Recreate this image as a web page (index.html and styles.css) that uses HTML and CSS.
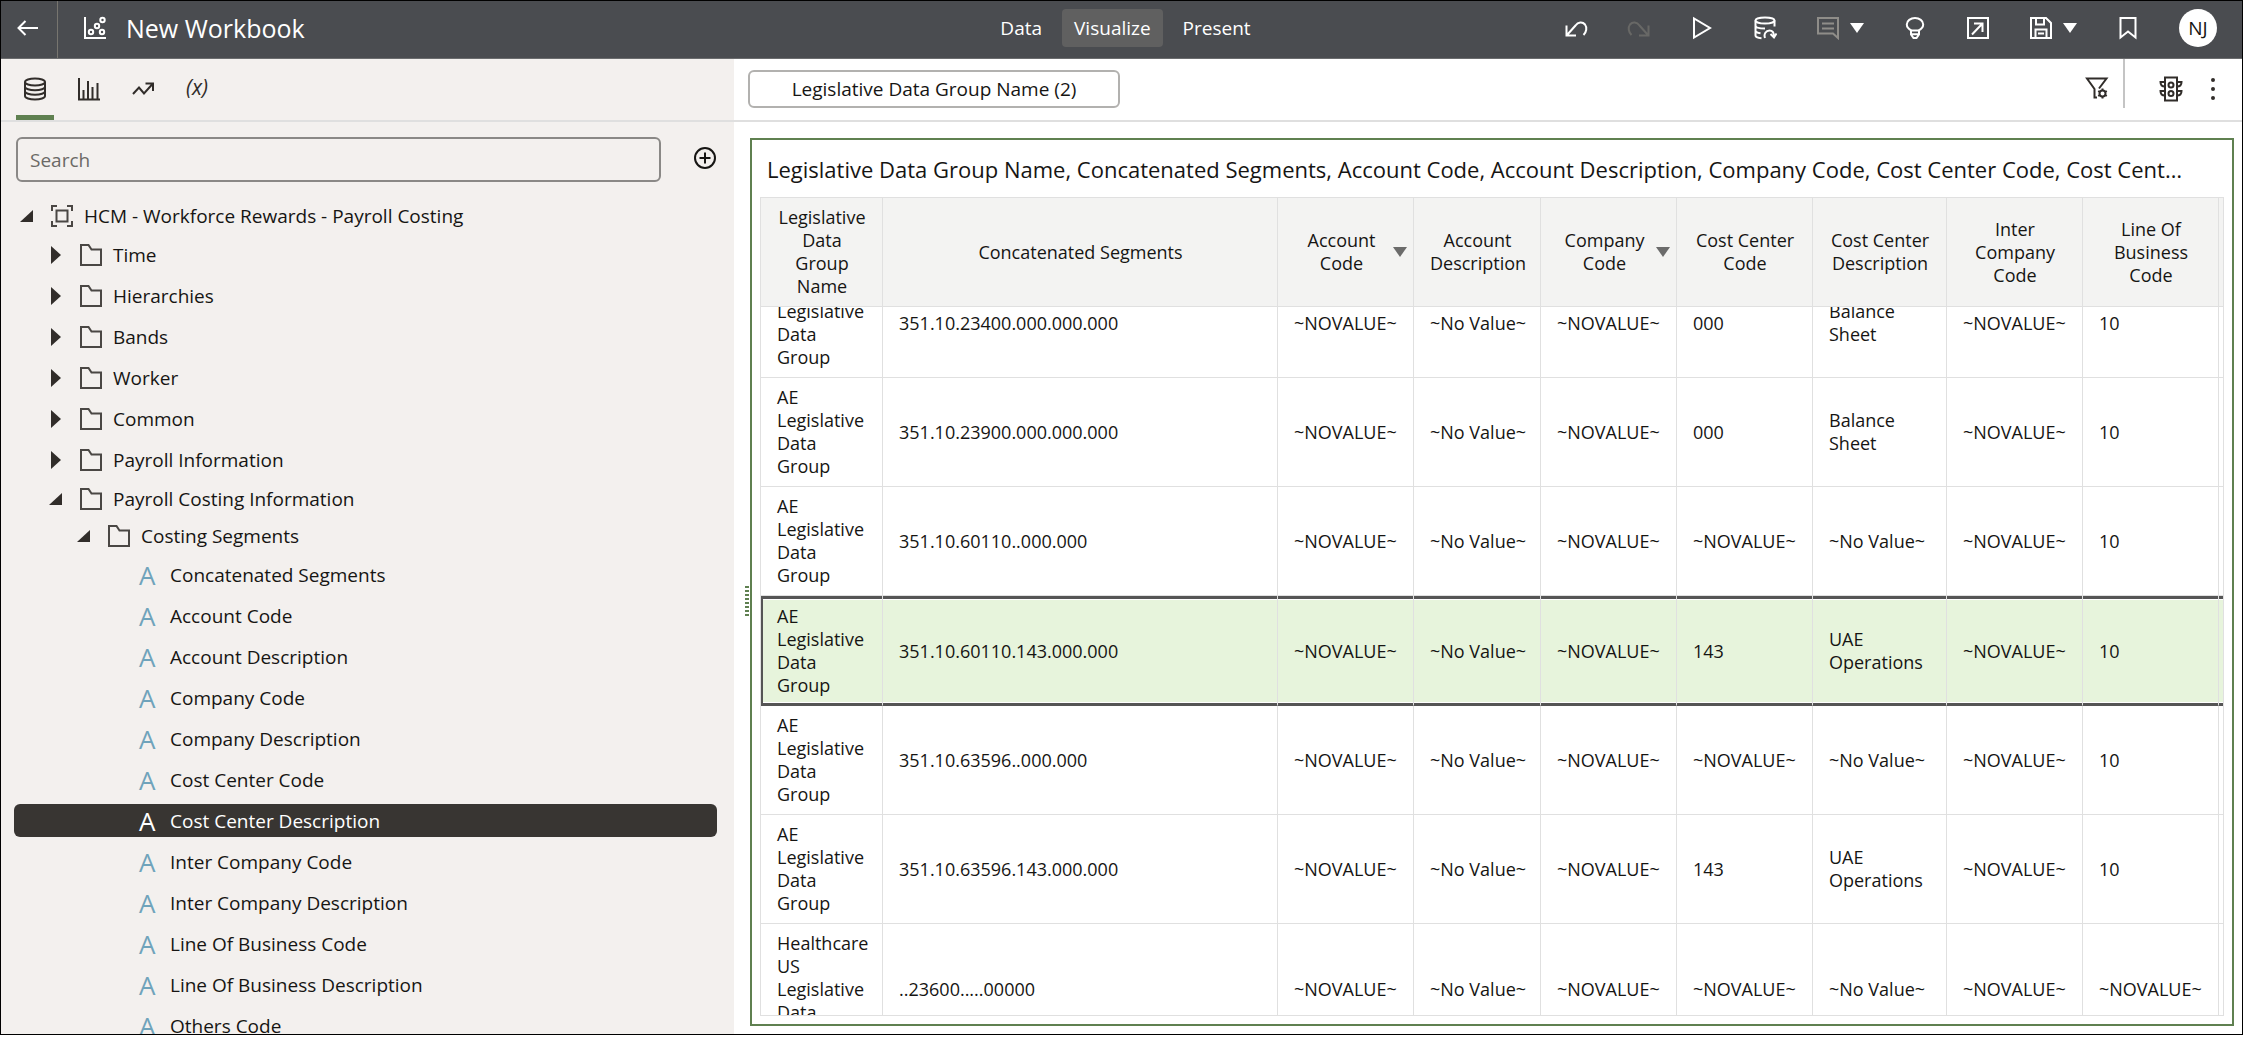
FILE: index.html
```html
<!DOCTYPE html>
<html lang="en">
<head>
  <meta charset="UTF-8">
  <title>New Workbook</title>
  <meta name="viewport" content="width=device-width, initial-scale=1.0">
  <link rel="stylesheet" href="styles.css">
</head>
<body>
  <!-- Icon set -->
  <svg class="sprite" aria-hidden="true">
    <symbol id="i-back" viewBox="0 0 24 24"><path d="M22 12H3M9.500 5 2.500 12l7 7"/></symbol>
    <symbol id="i-scatter" viewBox="0 0 24 24"><path d="M2 1v21h21"/><circle cx="8" cy="16" r="2.200"/><circle cx="14" cy="10" r="2.200"/><circle cx="19" cy="16" r="2.200"/><circle cx="19.500" cy="4" r="2.200"/></symbol>
    <symbol id="i-undo" viewBox="0 0 24 24"><path d="M2.500 9.500v10H12M3 19l8.500-9.500c2.500-3.500 7-4 9.500-1 2.300 3 1.500 7.500-1.500 10.500"/></symbol>
    <symbol id="i-play" viewBox="0 0 24 24"><path d="M4 2.500v19l16-9.500z"/></symbol>
    <symbol id="i-dbrefresh" viewBox="0 0 24 24"><ellipse cx="12" cy="4.500" rx="9.500" ry="3"/><path d="M2.500 4.500v15c0 1.700 3 2.500 6 2.700M21.500 4.500v6M2.500 9.500c0 2 4 3 9.500 3M2.500 14.500c0 1.500 2 2.300 5 2.700M12 22c-1.500-4 1-7.500 4.500-7.500s4.500 2.500 4.500 6M17.500 18l3.500 3.500 2.500-4"/></symbol>
    <symbol id="i-comment" viewBox="0 0 24 24"><path d="M2 2h20v20l-5-4.500H2zM6 7.500h12M6 12.500h12"/></symbol>
    <symbol id="i-bulb" viewBox="0 0 24 24"><path d="M8.500 14.500C5.500 13 3.800 11 3.800 8.500 3.800 4.800 7.500 2 12 2s8.200 2.800 8.200 6.500c0 2.500-1.700 4.500-4.700 6M8 14.500h8v4l-2.500 3.500h-3L8 18.500zM8 18.200h8"/></symbol>
    <symbol id="i-export" viewBox="0 0 24 24"><path d="M2 2h20v20H2zM8 7.500h8.500V16M16 8 6 18.500"/></symbol>
    <symbol id="i-save" viewBox="0 0 24 24"><path d="M2 2h15l5 5v15H2zM7 2v6.500h8V2M6.500 22v-8.500h11V22M9 17.500h6"/></symbol>
    <symbol id="i-bookmark" viewBox="0 0 24 24"><path d="M4.500 2h15v19.500L12 15.500l-7.500 6z"/></symbol>
    <symbol id="i-db" viewBox="0 0 24 24"><ellipse cx="12" cy="5" rx="10" ry="3.500"/><path d="M2 5v14c0 2 4.500 3.500 10 3.500S22 21 22 19V5M2 9.700c0 2 4.500 3.500 10 3.500s10-1.500 10-3.500M2 14.300c0 2 4.500 3.500 10 3.500s10-1.500 10-3.500"/></symbol>
    <symbol id="i-bars" viewBox="0 0 24 24"><path d="M2 1v21.500h21M6.500 22v-9M11 22V4M15.500 22V10M20.500 22V6"/></symbol>
    <symbol id="i-trend" viewBox="0 0 24 24"><path d="m2 17 6-6.500 5 6L21.500 7M14.500 6.500H22V14"/></symbol>
    <symbol id="i-plus" viewBox="0 0 24 24"><circle cx="12" cy="12" r="10"/><path d="M12 6.500v11M6.500 12h11"/></symbol>
    <symbol id="i-subject" viewBox="0 0 24 24"><path d="M6.500 6.500h11v11h-11zM2 7V2h5M17 2h5v5M22 17v5h-5M7 22H2v-5"/></symbol>
    <symbol id="i-folder" viewBox="0 0 24 24"><path d="M2 2h7.500l3 4.500H22V22H2z"/></symbol>
    <symbol id="i-filter" viewBox="0 0 24 24"><path d="M14 12.500 21.500 2.500H2L9.500 13v8.500h2.500"/><circle cx="17.500" cy="17.500" r="3"/><path d="M17.500 12.500v2M17.500 20.500v2M13.200 15l1.700 1M20.100 19l1.700 1M13.200 20l1.700-1M20.100 16l1.700-1"/></symbol>
    <symbol id="i-traffic" viewBox="0 0 24 26"><path d="M6 1.500h12v23H6z"/><circle cx="12" cy="9" r="2.500"/><circle cx="12" cy="17.500" r="2.500"/><path d="M6 6H1.500c0 3 2 4.500 4.500 4.500M18 6h4.500c0 3-2 4.500-4.500 4.500M6 15H1.500c0 3 2 4.500 4.500 4.500M18 15h4.500c0 3-2 4.500-4.500 4.500"/></symbol>
    <symbol id="i-dots" viewBox="0 0 24 24"><path class="solid" d="M10 3a2 2 0 1 0 4 0 2 2 0 1 0-4 0M10 12a2 2 0 1 0 4 0 2 2 0 1 0-4 0M10 21a2 2 0 1 0 4 0 2 2 0 1 0-4 0"/></symbol>
    <symbol id="i-closed" viewBox="0 0 14 18"><path class="solid" d="M3 0v18l10-9z"/></symbol>
    <symbol id="i-open" viewBox="0 0 14 14"><path class="solid" d="M14 1v12H1z"/></symbol>
    <symbol id="i-caret" viewBox="0 0 14 10"><path class="solid" d="M0 0h14L7 10z"/></symbol>
  </svg>

  <div class="app">
    <header class="topbar">
      <div class="topbar-left">
        <button class="back" aria-label="Back"><svg class="icon"><use href="#i-back"/></svg></button>
        <svg class="icon"><use href="#i-scatter"/></svg>
        <h1>New Workbook</h1>
      </div>
      <nav class="modes">
        <button>Data</button>
        <button class="active">Visualize</button>
        <button>Present</button>
      </nav>
      <div class="tools">
        <button aria-label="Undo"><svg class="icon"><use href="#i-undo"/></svg></button>
        <button class="flip dark" aria-label="Redo" disabled><svg class="icon"><use href="#i-undo"/></svg></button>
        <button aria-label="Play"><svg class="icon"><use href="#i-play"/></svg></button>
        <button aria-label="Refresh data"><svg class="icon"><use href="#i-dbrefresh"/></svg></button>
        <div class="split">
          <button class="dim" aria-label="Notes" disabled><svg class="icon"><use href="#i-comment"/></svg></button>
          <button aria-label="Notes menu"><svg class="caret"><use href="#i-caret"/></svg></button>
        </div>
        <button aria-label="Insights"><svg class="icon"><use href="#i-bulb"/></svg></button>
        <button aria-label="Export"><svg class="icon"><use href="#i-export"/></svg></button>
        <div class="split">
          <button aria-label="Save"><svg class="icon"><use href="#i-save"/></svg></button>
          <button aria-label="Save menu"><svg class="caret"><use href="#i-caret"/></svg></button>
        </div>
        <button aria-label="Bookmark"><svg class="icon"><use href="#i-bookmark"/></svg></button>
        <button class="avatar">NJ</button>
      </div>
    </header>

    <aside class="sidebar">
      <div class="panel-tabs">
        <button class="active" aria-label="Data"><svg class="icon"><use href="#i-db"/></svg></button>
        <button aria-label="Visualizations"><svg class="icon"><use href="#i-bars"/></svg></button>
        <button aria-label="Analytics"><svg class="icon"><use href="#i-trend"/></svg></button>
        <button class="params" aria-label="Parameters">(x)</button>
      </div>
      <div class="search">
        <input type="text" placeholder="Search" aria-label="Search">
        <button aria-label="Add"><svg class="icon"><use href="#i-plus"/></svg></button>
      </div>
      <ul class="tree">
        <li class="open"><svg class="twist"><use href="#i-open"/></svg><svg class="icon"><use href="#i-subject"/></svg>HCM - Workforce Rewards - Payroll Costing</li>
        <li class="lvl2"><svg class="twist"><use href="#i-closed"/></svg><svg class="icon"><use href="#i-folder"/></svg>Time</li>
        <li class="lvl2"><svg class="twist"><use href="#i-closed"/></svg><svg class="icon"><use href="#i-folder"/></svg>Hierarchies</li>
        <li class="lvl2"><svg class="twist"><use href="#i-closed"/></svg><svg class="icon"><use href="#i-folder"/></svg>Bands</li>
        <li class="lvl2"><svg class="twist"><use href="#i-closed"/></svg><svg class="icon"><use href="#i-folder"/></svg>Worker</li>
        <li class="lvl2"><svg class="twist"><use href="#i-closed"/></svg><svg class="icon"><use href="#i-folder"/></svg>Common</li>
        <li class="lvl2"><svg class="twist"><use href="#i-closed"/></svg><svg class="icon"><use href="#i-folder"/></svg>Payroll Information</li>
        <li class="lvl2 open"><svg class="twist"><use href="#i-open"/></svg><svg class="icon"><use href="#i-folder"/></svg>Payroll Costing Information</li>
        <li class="lvl3 open"><svg class="twist"><use href="#i-open"/></svg><svg class="icon"><use href="#i-folder"/></svg>Costing Segments</li>
        <li class="leaf"><span class="type">A</span>Concatenated Segments</li>
        <li class="leaf"><span class="type">A</span>Account Code</li>
        <li class="leaf"><span class="type">A</span>Account Description</li>
        <li class="leaf"><span class="type">A</span>Company Code</li>
        <li class="leaf"><span class="type">A</span>Company Description</li>
        <li class="leaf"><span class="type">A</span>Cost Center Code</li>
        <li class="leaf selected"><span class="type">A</span>Cost Center Description</li>
        <li class="leaf"><span class="type">A</span>Inter Company Code</li>
        <li class="leaf"><span class="type">A</span>Inter Company Description</li>
        <li class="leaf"><span class="type">A</span>Line Of Business Code</li>
        <li class="leaf"><span class="type">A</span>Line Of Business Description</li>
        <li class="leaf"><span class="type">A</span>Others Code</li>
      </ul>
    </aside>

    <main>
      <div class="filterbar">
        <button class="chip">Legislative Data Group Name (2)</button>
        <div class="filter-tools">
          <button class="filter" aria-label="Filter settings"><svg class="icon"><use href="#i-filter"/></svg></button>
          <button aria-label="Auto apply"><svg class="icon tall"><use href="#i-traffic"/></svg></button>
          <button aria-label="Menu"><svg class="icon"><use href="#i-dots"/></svg></button>
        </div>
      </div>
      <section class="viz">
        <h2>Legislative Data Group Name, Concatenated Segments, Account Code, Account Description, Company Code, Cost Center Code, Cost Center Description, Inter Company Code, Line Of Business Code</h2>
        <div class="grid" id="grid">
          <table>
            <colgroup>
              <col class="c-name"><col><col class="c-code"><col class="c-short"><col class="c-code"><col class="c-code"><col class="c-desc"><col class="c-code"><col class="c-code"><col class="c-end">
            </colgroup>
            <thead>
              <tr>
                <th>Legislative Data Group Name</th>
                <th>Concatenated Segments</th>
                <th class="sorted"><div>Account Code<svg class="caret"><use href="#i-caret"/></svg></div></th>
                <th>Account Description</th>
                <th class="sorted"><div>Company Code<svg class="caret"><use href="#i-caret"/></svg></div></th>
                <th>Cost Center Code</th>
                <th>Cost Center Description</th>
                <th>Inter Company Code</th>
                <th>Line Of Business Code</th>
                <th class="end"></th>
              </tr>
            </thead>
            <tbody>
              <tr>
                <td>AE Legislative Data Group</td>
                <td>351.10.23400.000.000.000</td>
                <td>~NOVALUE~</td>
                <td>~No Value~</td>
                <td>~NOVALUE~</td>
                <td>000</td>
                <td>Balance Sheet</td>
                <td>~NOVALUE~</td>
                <td>10</td>
                <td class="end"></td>
              </tr>
              <tr>
                <td>AE Legislative Data Group</td>
                <td>351.10.23900.000.000.000</td>
                <td>~NOVALUE~</td>
                <td>~No Value~</td>
                <td>~NOVALUE~</td>
                <td>000</td>
                <td>Balance Sheet</td>
                <td>~NOVALUE~</td>
                <td>10</td>
                <td class="end"></td>
              </tr>
              <tr>
                <td>AE Legislative Data Group</td>
                <td>351.10.60110..000.000</td>
                <td>~NOVALUE~</td>
                <td>~No Value~</td>
                <td>~NOVALUE~</td>
                <td>~NOVALUE~</td>
                <td>~No Value~</td>
                <td>~NOVALUE~</td>
                <td>10</td>
                <td class="end"></td>
              </tr>
              <tr class="selected">
                <td>AE Legislative Data Group</td>
                <td>351.10.60110.143.000.000</td>
                <td>~NOVALUE~</td>
                <td>~No Value~</td>
                <td>~NOVALUE~</td>
                <td>143</td>
                <td>UAE Operations</td>
                <td>~NOVALUE~</td>
                <td>10</td>
                <td class="end"></td>
              </tr>
              <tr>
                <td>AE Legislative Data Group</td>
                <td>351.10.63596..000.000</td>
                <td>~NOVALUE~</td>
                <td>~No Value~</td>
                <td>~NOVALUE~</td>
                <td>~NOVALUE~</td>
                <td>~No Value~</td>
                <td>~NOVALUE~</td>
                <td>10</td>
                <td class="end"></td>
              </tr>
              <tr>
                <td>AE Legislative Data Group</td>
                <td>351.10.63596.143.000.000</td>
                <td>~NOVALUE~</td>
                <td>~No Value~</td>
                <td>~NOVALUE~</td>
                <td>143</td>
                <td>UAE Operations</td>
                <td>~NOVALUE~</td>
                <td>10</td>
                <td class="end"></td>
              </tr>
              <tr>
                <td>Healthcare US Legislative Data Group</td>
                <td>..23600.....00000</td>
                <td>~NOVALUE~</td>
                <td>~No Value~</td>
                <td>~NOVALUE~</td>
                <td>~NOVALUE~</td>
                <td>~No Value~</td>
                <td>~NOVALUE~</td>
                <td>~NOVALUE~</td>
                <td class="end"></td>
              </tr>
            </tbody>
          </table>
        </div>
      </section>
      <div class="splitter"></div>
    </main>
  </div>

  <script>
    // keep the grid scrolled a little past the first row
    document.getElementById("grid").scrollTop = 38;
  </script>
</body>
</html>
```
FILE: styles.css
```css
* {
  box-sizing: border-box;
}

body {
  margin: 0;
  padding: 0 2px 2px 0;
  height: 100vh;
  background: #fff;
  color: #161513;
  font-family: "Open Sans", "Noto Sans", sans-serif;
  font-size: 19px;
  overflow: hidden;
}

button {
  display: flex;
  align-items: center;
  justify-content: center;
  padding: 0;
  border: 0;
  background: none;
  color: inherit;
  font: inherit;
}

.sprite {
  display: none;
}

.icon {
  flex: none;
  width: 24px;
  height: 24px;
  fill: none;
  stroke: currentColor;
  stroke-width: 2;
}

.icon.tall {
  height: 26px;
}

.caret {
  flex: none;
  width: 14px;
  height: 10px;
}

.solid {
  fill: currentColor;
  stroke: none;
}

.app {
  display: grid;
  grid-template-columns: 733px 1fr;
  grid-template-rows: 58px 1fr;
  height: 100%;
  border: 1px solid #000;
}

/* Top bar */
.topbar {
  grid-column: 1 / -1;
  display: grid;
  grid-template-columns: 1fr auto 1fr;
  padding-left: 8px;
  background: #4a4c50;
  border-bottom: 1px solid #6b6c6e;
  color: #fff;
}

.topbar-left,
.tools {
  display: flex;
  align-items: center;
  padding-bottom: 4px;
}

.topbar-left > .icon {
  margin: 0 19px 0 25px;
}

.back {
  align-self: stretch;
  width: 49px;
  margin-bottom: -4px;
  padding: 0 11px 4px 0;
  border-right: 1px solid #77756f;
}

h1 {
  margin: 0;
  font-size: 25px;
  font-weight: 400;
}

.modes {
  display: flex;
  align-items: center;
  gap: 8px;
  padding-bottom: 4px;
}

.modes button {
  height: 38px;
  padding: 0 12px;
  border-radius: 4px;
}

.modes .active {
  background: #606060;
}

.tools {
  justify-content: flex-end;
  gap: 39px;
  padding-right: 25px;
}

.split {
  display: flex;
  gap: 10px;
}

.dim {
  color: #8f8d89;
}

.dark {
  color: #686866;
}

.flip {
  transform: scaleX(-1);
}

.avatar {
  width: 38px;
  height: 38px;
  border-radius: 50%;
  background: #fff;
  color: #161513;
}

/* Data panel */
.sidebar {
  display: flex;
  flex-direction: column;
  min-height: 0;
  background: #f3f0ee;
  overflow: hidden;
}

.panel-tabs,
.filterbar {
  flex: none;
  display: flex;
  height: 63px;
  border-bottom: 2px solid #dfdfdf;
}

.panel-tabs {
  gap: 16px;
  padding-left: 15px;
}

.panel-tabs button {
  width: 38px;
  padding-top: 3px;
  border-bottom: 5px solid transparent;
  color: #312d2a;
}

.panel-tabs .active {
  border-bottom-color: #5f8050;
}

.panel-tabs .params {
  padding: 0;
  font-size: 21px;
  font-style: italic;
}

.search {
  display: flex;
  align-items: center;
  gap: 32px;
  padding: 15px 17px 12px 15px;
}

.search input {
  flex: 1;
  height: 45px;
  padding: 0 12px;
  border: 2px solid #8a8886;
  border-radius: 6px;
  background: transparent;
  font: inherit;
}

.search input::placeholder {
  color: #6b6966;
  opacity: 1;
}

.search button {
  padding-bottom: 4px;
}

.tree {
  flex: 1;
  min-height: 0;
  margin: 0;
  padding: 3px 17px 0 13px;
  list-style: none;
  overflow: hidden;
}

.tree li {
  display: flex;
  align-items: center;
  height: 41px;
  padding-left: 5px;
}

.tree .icon {
  margin: 0 10px 0 17px;
  color: #4a4744;
}

.tree .open {
  height: 37px;
}

.tree .lvl2 {
  padding-left: 34px;
}

.tree .lvl3 {
  padding-left: 62px;
}

.tree .leaf {
  padding-left: 125px;
}

.tree .selected {
  height: 33px;
  margin: 4px 0;
  border-radius: 6px;
  background: #383532;
  color: #fff;
}

.twist {
  flex: none;
  width: 14px;
  height: 18px;
  color: #312d2a;
}

.type {
  width: 31px;
  color: #6fa3bb;
  font-size: 26px;
}

.selected .type {
  color: #fff;
}

/* Canvas */
main {
  position: relative;
  display: flex;
  flex-direction: column;
  min-width: 0;
  min-height: 0;
}

.filterbar {
  align-items: center;
  justify-content: space-between;
  padding: 0 17px 2px 14px;
}

.chip {
  width: 372px;
  height: 38px;
  border: 2px solid #b2b1af;
  border-radius: 6px;
}

.filter-tools {
  align-self: stretch;
  display: flex;
  align-items: center;
  gap: 18px;
  color: #312d2a;
}

.filter {
  align-self: flex-start;
  height: 49px;
  margin-right: 16px;
  padding: 8px 14px 0 0;
  border-right: 2px solid #c4c4c4;
}

.viz {
  flex: 1;
  display: flex;
  flex-direction: column;
  min-height: 0;
  margin: 16px 8px 8px 16px;
  padding: 0 8px 8px;
  border: 2px solid #5f8050;
}

h2 {
  margin: 0;
  padding: 2px 36px 0 7px;
  font-size: 22px;
  font-weight: 400;
  line-height: 55px;
  white-space: nowrap;
  overflow: hidden;
  text-overflow: ellipsis;
}

.grid {
  flex: 1;
  min-height: 0;
  border: 1px solid #e0e0e0;
  overflow: auto;
  scrollbar-width: none;
}

table {
  width: 100%;
  table-layout: fixed;
  border-spacing: 0;
  font-size: 18px;
  line-height: 23px;
}

.c-name {
  width: 122px;
}

.c-code {
  width: 136px;
}

.c-short {
  width: 127px;
}

.c-desc {
  width: 134px;
}

.c-end {
  width: 4px;
}

th, td {
  padding: 8px 15px 8px 16px;
  border-right: 1px solid #e0e0e0;
  border-bottom: 1px solid #e0e0e0;
}

td + td {
  padding-right: 8px;
}

th {
  position: sticky;
  top: 0;
  background: #f3f3f2;
  font-weight: 400;
}

.sorted {
  padding-left: 12px;
  padding-right: 6px;
}

.sorted div {
  display: flex;
  align-items: center;
  text-align: center;
}

.sorted .caret {
  color: #6b6b6b;
}

th.end, td.end {
  padding: 0;
  border-right: 0;
}

tr.selected td {
  padding-top: 9px;
  background: #e7f4dc;
  border-bottom-color: #555;
  box-shadow: inset 0 3px #555, inset 0 4px #fff, inset 0 -2px #555, inset 0 -3px #fff;
}

tr.selected td:first-child {
  box-shadow: inset 2px 0 #555, inset 0 3px #555, inset 0 4px #fff, inset 0 -2px #555, inset 0 -3px #fff;
}

/* Drag handle between the panel and the canvas */
.splitter {
  position: absolute;
  top: 54%;
  left: 11px;
  width: 4px;
  height: 30px;
  background: repeating-linear-gradient(#5f8050 0 2px, transparent 2px 4px);
}
```
